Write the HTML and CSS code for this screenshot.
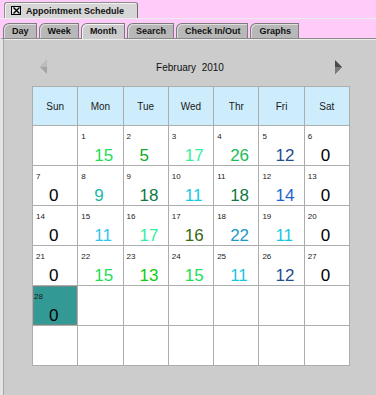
FILE: index.html
```html
<!DOCTYPE html>
<html lang="en">
<head>
    <meta charset="UTF-8">
    <title>Appointment Schedule</title>
    <link rel="stylesheet" href="styles.css">
</head>
<body>
<div class="window-bar">
    <div class="window-tab">
        <span class="close-box">
            <svg width="7" height="7" viewBox="0 0 7 7"><path d="M0.5 0.5 L6.5 6.5 M6.5 0.5 L0.5 6.5" stroke="#000" stroke-width="1.4"/></svg>
        </span>
        Appointment Schedule
    </div>
</div>

<div class="tabs">
    <div class="tab">Day</div>
    <div class="tab">Week</div>
    <div class="tab active">Month</div>
    <div class="tab">Search</div>
    <div class="tab">Check In/Out</div>
    <div class="tab">Graphs</div>
</div>

<div class="panel">
    <div class="calendar">
        <div class="nav">
            <svg class="arrow" width="8" height="14" viewBox="0 0 8 14"><polygon points="7,0 0,7 7,14" fill="#a4a4a4"/><polygon points="7,0 0,7 7,7" fill="#bcbcbc"/></svg>
            <span class="month">February  2010</span>
            <svg class="arrow" width="8" height="14" viewBox="0 0 8 14"><polygon points="1,0 8,7 1,14" fill="#4a4a4a"/><polygon points="1,7 8,7 1,14" fill="#7a7a7a"/></svg>
        </div>

        <div class="grid">
            <div class="head">Sun</div>
            <div class="head">Mon</div>
            <div class="head">Tue</div>
            <div class="head">Wed</div>
            <div class="head">Thr</div>
            <div class="head">Fri</div>
            <div class="head">Sat</div>

            <div class="cell"></div>
            <div class="cell"><div class="num">1</div><div class="count c-lime">15</div></div>
            <div class="cell"><div class="num">2</div><div class="count c-green">5</div></div>
            <div class="cell"><div class="num">3</div><div class="count c-mint">17</div></div>
            <div class="cell"><div class="num">4</div><div class="count c-leaf">26</div></div>
            <div class="cell"><div class="num">5</div><div class="count c-navy">12</div></div>
            <div class="cell"><div class="num">6</div><div class="count">0</div></div>

            <div class="cell"><div class="num">7</div><div class="count">0</div></div>
            <div class="cell"><div class="num">8</div><div class="count c-teal">9</div></div>
            <div class="cell"><div class="num">9</div><div class="count c-forest">18</div></div>
            <div class="cell"><div class="num">10</div><div class="count c-cyan">11</div></div>
            <div class="cell"><div class="num">11</div><div class="count c-forest">18</div></div>
            <div class="cell"><div class="num">12</div><div class="count c-blue">14</div></div>
            <div class="cell"><div class="num">13</div><div class="count">0</div></div>

            <div class="cell"><div class="num">14</div><div class="count">0</div></div>
            <div class="cell"><div class="num">15</div><div class="count c-sky">11</div></div>
            <div class="cell"><div class="num">16</div><div class="count c-mint">17</div></div>
            <div class="cell"><div class="num">17</div><div class="count c-olive">16</div></div>
            <div class="cell"><div class="num">18</div><div class="count c-ocean">22</div></div>
            <div class="cell"><div class="num">19</div><div class="count c-cyan">11</div></div>
            <div class="cell"><div class="num">20</div><div class="count">0</div></div>

            <div class="cell"><div class="num">21</div><div class="count">0</div></div>
            <div class="cell"><div class="num">22</div><div class="count c-lime">15</div></div>
            <div class="cell"><div class="num">23</div><div class="count c-grass">13</div></div>
            <div class="cell"><div class="num">24</div><div class="count c-lime">15</div></div>
            <div class="cell"><div class="num">25</div><div class="count c-cyan">11</div></div>
            <div class="cell"><div class="num">26</div><div class="count c-navy">12</div></div>
            <div class="cell"><div class="num">27</div><div class="count">0</div></div>

            <div class="cell today"><div class="num">28</div><div class="count">0</div></div>
            <div class="cell"></div>
            <div class="cell"></div>
            <div class="cell"></div>
            <div class="cell"></div>
            <div class="cell"></div>
            <div class="cell"></div>

            <div class="cell"></div>
            <div class="cell"></div>
            <div class="cell"></div>
            <div class="cell"></div>
            <div class="cell"></div>
            <div class="cell"></div>
            <div class="cell"></div>
        </div>
    </div>
</div>
</body>
</html>
```

FILE: styles.css
```css
*{
    padding: 0;
    margin: 0;
    box-sizing: border-box;
}
body{
    width: 376px;
    height: 395px;
    overflow: hidden;
    background: #ffccfa;
    font-family: "Liberation Sans", Arial, sans-serif;
    color: #111;
}

/* window tab */
.window-bar{
    height: 19px;
    padding: 2px 0 0 4px;
    border-bottom: 1px solid #ececec;
}
.window-tab{
    display: flex;
    align-items: center;
    width: 134px;
    height: 16px;
    padding-left: 6px;
    background: #d6d6d6;
    border: 1px solid #8e8e8e;
    border-bottom: none;
    border-right-color: #6e6e6e;
    border-radius: 3px 3px 0 0;
    box-shadow: inset 1px 1px 0 #f2f2f2;
    font-size: 9px;
    font-weight: bold;
}
.close-box{
    display: flex;
    align-items: center;
    justify-content: center;
    width: 10px;
    height: 9px;
    margin-right: 5px;
    border: 1px solid #000;
    background: #e4e4e4;
}

/* tabs */
.tabs{
    display: flex;
    gap: 2px;
    height: 19px;
    padding: 4px 0 0 3px;
}
.tab{
    height: 15px;
    padding: 0 7px 0 8px;
    line-height: 14px;
    font-size: 9px;
    font-weight: bold;
    background: #b8b8b8;
    border: 1px solid #7c7c7c;
    border-bottom: none;
    border-top-left-radius: 6px;
    box-shadow: inset 1px 1px 0 #dedede;
}
.tab.active{
    height: 16px;
    background: #cccccc;
    box-shadow: inset 1px 1px 0 #f4f4f4;
    position: relative;
    z-index: 1;
}

/* panel */
.panel{
    height: 357px;
    background: #cccccc;
    border-top: 1px solid #8a8a8a;
    border-left: 3px solid #e4e4e4;
    box-shadow: inset 1px 0 0 #a6a6a6, inset 0 1px 0 #ececec;
}
.calendar{
    width: 318px;
    margin-left: 29px;
    padding-top: 20px;
}
.nav{
    display: flex;
    align-items: center;
    justify-content: space-between;
    height: 16px;
    padding: 0 8px;
}
.month{
    white-space: pre;
    font-size: 10px;
    color: #111;
    margin-right: 2px;
}
.grid{
    display: grid;
    grid-template-columns: repeat(7, 1fr);
    grid-template-rows: 38px repeat(6, 39px);
    gap: 1px;
    padding: 1px;
    margin-top: 11px;
    background: #adadad;
}
.head{
    display: flex;
    align-items: center;
    justify-content: center;
    background: #cdedfd;
    font-size: 10px;
    color: #1a1a1a;
}
.cell{
    background: #fff;
}
.num{
    padding: 7px 0 0 3px;
    font-size: 8px;
    line-height: 8px;
    color: #222;
}
.count{
    margin-top: 6px;
    padding-left: 16px;
    font-size: 17px;
    line-height: 18px;
    color: #000;
}
.cell.today{
    background: #339994;
    box-shadow: inset 0 0 0 1px #6c8a88;
}
.cell.today .num{
    padding-left: 1px;
    color: #1a1a1a;
}

/* count colours */
.c-lime{ color: #22dd55; }
.c-green{ color: #11aa22; }
.c-mint{ color: #33f0a0; }
.c-leaf{ color: #22bb55; }
.c-navy{ color: #1f4e8f; }
.c-teal{ color: #22b8a4; }
.c-forest{ color: #117a44; }
.c-cyan{ color: #18c8e0; }
.c-blue{ color: #1a66cc; }
.c-sky{ color: #33c4ee; }
.c-olive{ color: #3a6a10; }
.c-ocean{ color: #2299cc; }
.c-grass{ color: #11cc11; }
```
